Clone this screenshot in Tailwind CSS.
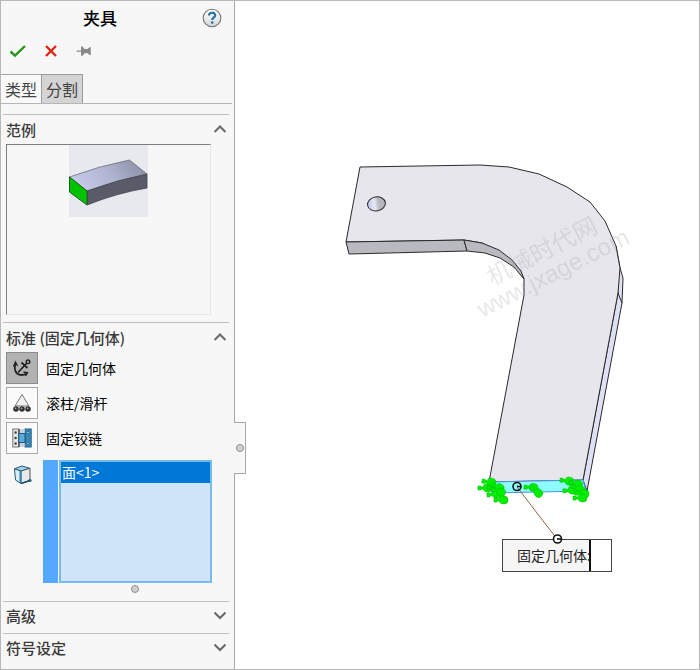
<!DOCTYPE html>
<html lang="zh-CN">
<head>
  <meta charset="UTF-8">
  <title>夹具</title>
  <meta name="viewport" content="width=device-width, initial-scale=1">
  <script src="https://cdn.jsdelivr.net/npm/@tailwindcss/browser@4"></script>
</head>

<body class="bg-white font-['Noto_Sans_CJK_SC',sans-serif] text-[15px] text-black">
  <div class="flex min-h-screen border border-[#b8b8b8]">

    <aside class="relative w-[234px] shrink-0 border-r border-[#a8a8a8] bg-[#f7f7f7]">
      <header class="relative flex h-[34px] items-center pl-[82px]">
        <h1 class="text-[17px] leading-6 font-medium">夹具</h1>
        <button type="button" aria-label="帮助" class="absolute top-[7px] right-3">
          <svg class="block size-5" viewBox="0 0 20 20">
            <defs>
              <linearGradient id="help" x1="0" y1="0" x2="0" y2="1">
                <stop offset="0" stop-color="#fff" />
                <stop offset="1" stop-color="#d4d6d9" />
              </linearGradient>
            </defs>
            <circle cx="10" cy="10" r="8.8" fill="url(#help)" stroke="#777" stroke-width="1.1" />
            <path d="M7 7.6C7 3.8 13.2 3.8 13.2 7.4C13.2 9.4 10.2 9.4 10.2 12" fill="none" stroke="#2474ad" stroke-width="2.2" />
            <circle cx="10.2" cy="14.6" r="1.3" fill="#2474ad" />
          </svg>
        </button>
      </header>

      <div class="flex h-[39px] items-center gap-4 pb-2 pl-2">
        <button type="button" aria-label="确定">
          <svg class="block h-4 w-[18px]" viewBox="0 0 18 16">
            <path d="M1.500 8.500L6 12.700L16 3" fill="none" stroke="#27931a" stroke-width="2.4" />
          </svg>
        </button>
        <button type="button" aria-label="取消">
          <svg class="block size-4" viewBox="0 0 16 16">
            <path d="M3 3L13 13M13 3L3 13" fill="none" stroke="#e02410" stroke-width="2.4" />
          </svg>
        </button>
        <button type="button" aria-label="保持可见">
          <svg class="block h-4 w-[18px]" viewBox="0 0 18 16" fill="#8a8a8a">
            <path d="M1.500 7.500H7V8.700H1.500ZM6 3.500H7.600L9.500 6H12.500L14.500 4.200H15.800V12H14.500L12.500 10.200H9.500L7.600 12.700H6Z" />
          </svg>
        </button>
      </div>

      <nav class="mr-[2px] flex border-b border-[#b5b5b5] text-[16px] leading-[27px] text-[#444]">
        <button type="button" class="h-[29px] border-t border-[#a5a5a5] bg-[#f9f9f9] px-1">类型</button>
        <button type="button" class="h-[29px] border border-b-0 border-[#9c9c9c] bg-[#d4d4d4] px-1">分割</button>
      </nav>

      <section class="mr-[5px] ml-[2px] mt-[10px] mb-[7px] border-t border-[#bfbfbf]">
        <div class="flex h-[29px] items-center justify-between px-[3px]">
          <h2 class="leading-6 font-medium text-[#3a3a3a]">范例</h2>
          <button type="button" aria-label="折叠范例">
            <svg class="block size-3" viewBox="0 0 12 12"><path d="M0.500 8L6 2.500L11.500 8" fill="none" stroke="#6c6c6c" stroke-width="2.2" /></svg>
          </button>
        </div>
        <div class="ml-[3px] h-[171px] w-[205px] border border-t-[#7d7d7d] border-r-[#e6e6e6] border-b-[#e6e6e6] border-l-[#7d7d7d]">
          <svg class="mx-auto block h-[72px] w-[79px]" viewBox="0 0 79 72">
            <defs>
              <linearGradient id="beamTop" x1="0" y1="0.6" x2="1" y2="0.3">
                <stop offset="0" stop-color="#c8cceb" />
                <stop offset="0.5" stop-color="#b0b5d2" />
                <stop offset="1" stop-color="#8a8fa4" />
              </linearGradient>
            </defs>
            <rect width="79" height="72" fill="#e8e8ef" />
            <path d="M0.5 32Q30 21 60.5 15L78 29Q48 35 18 46Z" fill="url(#beamTop)" stroke="#6d6f7a" stroke-width="0.8" />
            <path d="M18 46Q48 35 78 29V43Q48 48 18 60Z" fill="#595b69" stroke="#464852" stroke-width="0.8" />
            <path d="M0.5 32L18 46V60L0.5 47Z" fill="#00c300" stroke="#155f15" />
          </svg>
        </div>
      </section>

      <section class="mr-[5px] ml-[2px] border-t border-[#bfbfbf]">
        <div class="flex h-[29px] items-center justify-between px-[3px]">
          <h2 class="leading-6 font-medium text-[#3a3a3a]">标准 (固定几何体)</h2>
          <button type="button" aria-label="折叠标准">
            <svg class="block size-3" viewBox="0 0 12 12"><path d="M0.500 8L6 2.500L11.500 8" fill="none" stroke="#6c6c6c" stroke-width="2.2" /></svg>
          </button>
        </div>

        <div class="flex flex-col items-start gap-[3px] pl-[3px] text-[14px]">
          <button type="button" class="flex items-center gap-2">
            <span class="flex size-8 items-center justify-center border border-[#8c8c8c] bg-[#b2b2b2]">
              <svg class="size-5" viewBox="0 0 20 20" fill="none" stroke="#222" stroke-width="1.8">
                <path d="M14.500 5.500L6 14.500M9.500 4.500L15.500 10" />
                <circle cx="16" cy="3.800" r="1.800" stroke-width="1.400" />
                <path d="M3.500 5Q1.500 12 5 15.500Q9 18.500 15 15.500" />
                <path d="M1.500 8.500L3.500 4L5.500 8M11.500 14L15.500 14.800L13.500 18" stroke-width="1.300" />
              </svg>
            </span>
            固定几何体
          </button>
          <button type="button" class="flex items-center gap-2">
            <span class="flex size-8 items-center justify-center border border-[#a9a9a9] bg-[#fafafa]">
              <svg class="size-5" viewBox="0 0 20 20">
                <path d="M10 1.5L17 13H3Z" fill="#f1f1f1" stroke="#777" />
                <g fill="#333">
                  <circle cx="4" cy="16" r="2.8" /><circle cx="10" cy="16" r="2.8" /><circle cx="16" cy="16" r="2.8" />
                </g>
                <g fill="#aaa">
                  <circle cx="3.6" cy="15.4" r="0.8" /><circle cx="9.6" cy="15.4" r="0.8" /><circle cx="15.6" cy="15.4" r="0.8" />
                </g>
              </svg>
            </span>
            滚柱/滑杆
          </button>
          <button type="button" class="flex items-center gap-2">
            <span class="flex size-8 items-center justify-center border border-[#a9a9a9] bg-[#fafafa]">
              <svg class="size-5" viewBox="0 0 20 20">
                <rect x="0.8" y="1" width="6" height="18" fill="#e5e5e5" stroke="#777" />
                <rect x="13" y="1" width="6.2" height="18" fill="#3388bd" stroke="#24658f" />
                <path d="M7 1V19" stroke="#555" stroke-width="1.6" />
                <path d="M8 1H12.500V5H8ZM8 15H12.500V19H8Z" fill="#c9d3da" />
                <rect x="6.800" y="5.500" width="6.200" height="9" fill="#56aee0" stroke="#205877" />
                <g fill="#444">
                  <circle cx="3.6" cy="4.5" r="1.2" /><circle cx="3.6" cy="10" r="1.2" /><circle cx="3.6" cy="15.5" r="1.2" />
                </g>
                <g fill="#b8dcf0" stroke="#184c6b" stroke-width="0.7">
                  <circle cx="16" cy="4.5" r="1.2" /><circle cx="16" cy="10" r="1.2" /><circle cx="16" cy="15.5" r="1.2" />
                </g>
              </svg>
            </span>
            固定铰链
          </button>
        </div>

        <div class="mt-[6px] flex pl-[10px]">
          <svg class="mt-[5px] mr-[10px] size-5 shrink-0" viewBox="0 0 20 20">
            <path d="M1.500 3.800L9 1L17 3.300L8 6Z" fill="#9bd5f5" stroke="#2c5871" />
            <path d="M1.500 3.800L8 6V18.500L2.500 15Z" fill="#dcecf5" stroke="#2c5871" />
            <path d="M8 6L17 3.300V15.500L8 18.500Z" fill="#e9e9e9" stroke="#44535c" />
            <path d="M7.500 6V18.300" stroke="#2f87b8" stroke-width="2" />
            <path d="M8.500 18.300L17 15.500" stroke="#17405b" stroke-width="1.400" />
            <circle cx="17" cy="15.500" r="1.600" fill="#1e6288" />
          </svg>
          <div class="mr-px w-[15px] bg-[#55a8ff]"></div>
          <ul class="h-[123px] w-[153px] border-2 border-[#76bbea] bg-[#cfe4f8] text-[14px] leading-[21px]">
            <li class="bg-[#0078d7] pl-px text-white">面&lt;1&gt;</li>
          </ul>
        </div>
        <div class="flex h-[18px] justify-center pt-[2px] pl-[37px]">
          <span class="size-2 rounded-full border border-[#8f8f8f] bg-[#d0d0d0]"></span>
        </div>
      </section>

      <section class="mr-[5px] ml-[2px] flex h-8 items-center justify-between border-t border-[#bfbfbf] px-[3px] pb-[3px]">
        <h2 class="leading-6 font-medium text-[#3a3a3a]">高级</h2>
        <button type="button" aria-label="展开高级">
          <svg class="block size-3" viewBox="0 0 12 12"><path d="M0.500 2.500L6 8L11.500 2.500" fill="none" stroke="#6c6c6c" stroke-width="2.2" /></svg>
        </button>
      </section>
      <section class="mr-[5px] ml-[2px] flex h-8 items-center justify-between border-t border-[#bfbfbf] px-[3px] pb-[3px]">
        <h2 class="leading-6 font-medium text-[#3a3a3a]">符号设定</h2>
        <button type="button" aria-label="展开符号设定">
          <svg class="block size-3" viewBox="0 0 12 12"><path d="M0.500 2.500L6 8L11.500 2.500" fill="none" stroke="#6c6c6c" stroke-width="2.2" /></svg>
        </button>
      </section>

      <!-- 面板折叠手柄 -->
      <button type="button" aria-label="折叠面板" class="absolute top-[421px] -right-3 flex h-[52px] w-3 items-center justify-center border border-l-0 border-[#a8a8a8] bg-[#f7f7f7]">
        <span class="size-2 rounded-full border border-[#8f8f8f] bg-[#d0d0d0]"></span>
      </button>
    </aside>

    <main class="min-w-0 flex-1">
      <svg class="block w-full" viewBox="235 1 464 668">
        <defs>
          <linearGradient id="hole" x1="0" y1="0" x2="1" y2="0">
            <stop offset="0" stop-color="#c4c7ec" />
            <stop offset="0.4" stop-color="#e6e8f5" />
            <stop offset="0.6" stop-color="#b9bbc2" />
            <stop offset="1" stop-color="#aeb0b5" />
          </linearGradient>
          <g id="arrow" fill="#00ee00" stroke="#00c400" stroke-width="0.6">
            <path d="M0 -2H3V-1H5Q6 -5 10 -4Q14 -4 14 0Q14 4 10 4Q6 4 5 1H3V2H0Z" />
          </g>
        </defs>

        <!-- 弯板零件 -->
        <g stroke="#2a2a2a" stroke-linejoin="round">
          <path d="M616 246L620 268L623 278L622 303L587 491L583 480L618 293Z" fill="#dfe0f5" />
          <path d="M360 167L480 165L509 167L539 174L567 187L590 202L605 221L616 246L620 268L618 293L583 480L489 482L524 295L524 279L515 266L499 252L482 243L464 240L346 242Z" fill="#e7e6ed" />
          <path d="M346 242L464 240L467 251L349 254Z" fill="#b9babf" />
          <path d="M464 240L482 243L499 250L512 260L521 271L524 279L514 267L500 258L485 253L467 251Z" fill="#b9babf" />
          <path d="M618 293L622 303" fill="none" />
          <ellipse cx="376.5" cy="204" rx="9" ry="7" fill="url(#hole)" transform="rotate(-10 376 204)" />
        </g>

        <path d="M490 482L583 480L586 491L492 493Z" fill="#8efcff" stroke="#4596e8" />

        <!-- 固定约束符号 -->
        <g>
          <use href="#arrow" transform="translate(478 488)" />
          <use href="#arrow" transform="translate(482 481) rotate(8)" />
          <use href="#arrow" transform="translate(487 487) rotate(15)" />
          <use href="#arrow" transform="translate(487 495) rotate(-5)" />
          <use href="#arrow" transform="translate(491 484) rotate(25)" />
          <use href="#arrow" transform="translate(492 489) rotate(20)" />
          <use href="#arrow" transform="translate(494 500)" />
          <use href="#arrow" transform="translate(524 487) rotate(4)" />
          <use href="#arrow" transform="translate(531 487) rotate(40)" />
          <use href="#arrow" transform="translate(560 480) rotate(8)" />
          <use href="#arrow" transform="translate(563 491) rotate(-5)" />
          <use href="#arrow" transform="translate(569 482) rotate(15)" />
          <use href="#arrow" transform="translate(572 486) rotate(25)" />
          <use href="#arrow" transform="translate(575 493) rotate(5)" />
          <use href="#arrow" transform="translate(573 498)" />
        </g>

        <g transform="rotate(-27 549 265)" fill="#a0a0a0" fill-opacity="0.25" text-anchor="middle">
          <text x="549" y="258" font-size="24">机械时代网</text>
          <text x="549" y="282" font-size="24" font-family="Liberation Sans, sans-serif">www.jxage.com</text>
        </g>

        <!-- 标注框与引线 -->
        <path d="M517 487L557 539" stroke="#8c6546" />
        <rect x="502.5" y="539.5" width="109" height="32" fill="#fff" stroke="#444" />
        <rect x="503" y="540" width="86" height="31" fill="#f6f6f6" />
        <text x="517" y="561" font-size="14" fill="#222">固定几何体:</text>
        <path d="M590 540V571" stroke="#111" stroke-width="2" />
        <g fill="none" stroke="#111" stroke-width="1.6">
          <circle cx="517" cy="486.5" r="4" />
          <path d="M517 486.5H521" />
          <circle cx="557.5" cy="539" r="4" fill="#fff" />
          <path d="M557 539H561" />
        </g>
      </svg>
    </main>
  </div>
</body>
</html>
